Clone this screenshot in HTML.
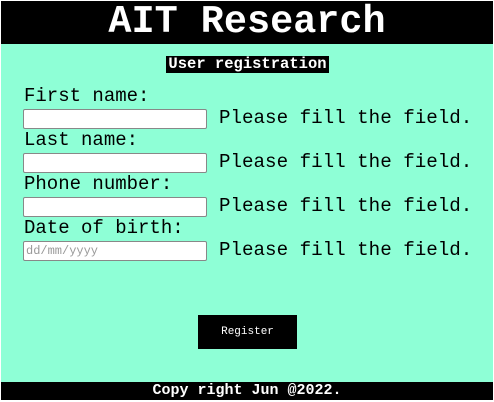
<!DOCTYPE html>
<html><head><style>
html,body{margin:0;padding:0;}
body{width:494px;height:402px;background:#fff;position:relative;overflow:hidden;font-family:"Liberation Mono","Courier New",monospace;}
.main{position:absolute;left:1px;top:1px;width:492px;height:399px;background:#8effd6;}
.hdr{position:absolute;left:1px;top:1px;width:492px;height:43px;background:#000;color:#fff;font-weight:bold;font-size:38.5px;line-height:43px;text-align:center;}
.sub{position:absolute;left:166px;top:56px;width:163px;height:17px;background:#000;color:#fff;font-weight:bold;font-size:15.5px;line-height:17px;text-align:center;}
.lbl{position:absolute;left:24px;font-size:19px;line-height:20px;color:#000;}
.msg{position:absolute;left:219px;font-size:19.2px;line-height:20px;color:#000;}
.inp{position:absolute;left:23px;background:#fff;border:1px solid #888;border-radius:2px;font-size:12px;line-height:18px;color:#999;padding-left:2px;box-sizing:border-box;width:184px;height:20px;}
.btn{position:absolute;left:198px;top:315px;width:99px;height:34px;background:#000;color:#fff;font-size:11px;line-height:34px;text-align:center;}
.ftr{position:absolute;left:1px;top:382px;width:492px;height:18px;background:#000;color:#fff;font-weight:bold;font-size:15px;line-height:18px;text-align:center;}
</style></head><body>
<div class="main"></div>
<div class="hdr">AIT Research</div>
<div class="sub">User registration</div>
<div class="lbl" style="top:86px">First name:</div>
<div class="inp" style="top:109px"></div>
<div class="msg" style="top:108px">Please fill the field.</div>
<div class="lbl" style="top:130px">Last name:</div>
<div class="inp" style="top:153px"></div>
<div class="msg" style="top:152px">Please fill the field.</div>
<div class="lbl" style="top:174px">Phone number:</div>
<div class="inp" style="top:197px"></div>
<div class="msg" style="top:196px">Please fill the field.</div>
<div class="lbl" style="top:218px">Date of birth:</div>
<div class="inp" style="top:241px">dd/mm/yyyy</div>
<div class="msg" style="top:240px">Please fill the field.</div>
<div class="btn">Register</div>
<div class="ftr">Copy right Jun @2022.</div>
</body></html>
